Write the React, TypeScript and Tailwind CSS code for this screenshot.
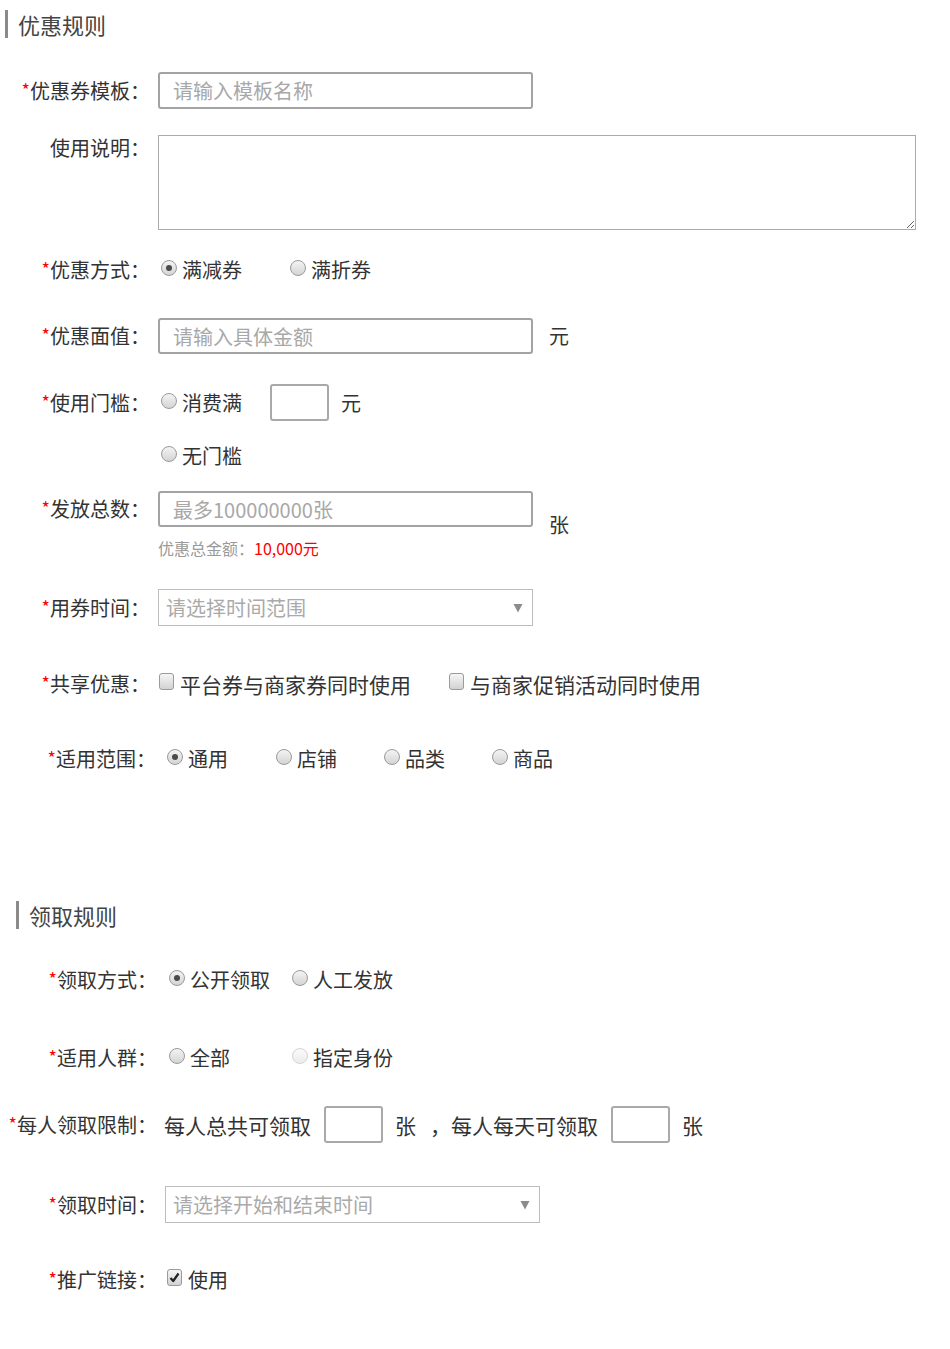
import React from 'react'

function Label({ text, req, w }: { text: string; req?: boolean; w: string }) {
  return (
    <div className={`${w} shrink-0 flex justify-end items-start text-[20px] leading-[24px] text-[#333] whitespace-nowrap`}>
      {req && <span className="text-[18px] leading-none text-[#ff0000] mt-[1px]">*</span>}
      <span>{text}：</span>
    </div>
  )
}

function Radio({ checked, disabled }: { checked?: boolean; disabled?: boolean }) {
  return (
    <span
      className={`shrink-0 w-[16px] h-[16px] rounded-full border flex items-center justify-center -mt-[4px] ${
        disabled
          ? 'border-[#d4d4d4] bg-linear-to-b from-[#fafafa] to-[#ececec]'
          : 'border-[#9a9a9a] bg-linear-to-b from-[#f4f4f4] to-[#d4d4d4]'
      }`}
    >
      {checked && <span className="w-[6px] h-[6px] rounded-full bg-[#4a4a4a]" />}
    </span>
  )
}

function Option({ text, checked, disabled, w }: { text: string; checked?: boolean; disabled?: boolean; w: string }) {
  return (
    <div className={`${w} shrink-0 flex items-center`}>
      <Radio checked={checked} disabled={disabled} />
      <span className="ml-[5px] text-[20px] leading-[24px] text-[#333] whitespace-nowrap">{text}</span>
    </div>
  )
}

function Checkbox({ checked }: { checked?: boolean }) {
  return (
    <span className="shrink-0 w-[15px] h-[17px] rounded-[3px] border border-[#9a9a9a] bg-linear-to-b from-[#f6f6f6] to-[#d2d2d2] flex items-center justify-center -mt-[6px]">
      {checked && (
        <svg width="11" height="11" viewBox="0 0 11 11">
          <path d="M1.5 6 L4.2 9 L9.5 1.5" fill="none" stroke="#222" strokeWidth="2.2" strokeLinejoin="round" />
        </svg>
      )}
    </span>
  )
}

function Section({ title, pad }: { title: string; pad: string }) {
  return (
    <div className={`flex items-center ${pad}`}>
      <div className="w-[3px] h-[28px] bg-[#8a8a8a]" />
      <span className="ml-[10px] text-[22px] leading-[28px] text-[#444]">{title}</span>
    </div>
  )
}

function Select({ placeholder }: { placeholder: string }) {
  return (
    <div className="w-[375px] h-[37px] border border-[#bdbdbd] flex items-center justify-between pl-[7px] pr-[9px]">
      <span className="text-[20px] leading-[24px] text-[#aaa]">{placeholder}</span>
      <svg width="10" height="10" viewBox="0 0 10 10">
        <path d="M0.5 1 L9.5 1 L5 9.5 Z" fill="#8c8c8c" />
      </svg>
    </div>
  )
}

export default function App() {
  const inputCls =
    'w-[375px] h-[36px] border-2 border-[#a3a3a3] rounded-[3px] pl-[13px] text-[20px] text-[#333] placeholder:text-[#a8a8a8] outline-none'

  return (
    <div className="w-[950px] min-h-[1349px] bg-white font-['Noto_Sans_CJK_SC',sans-serif] text-[#333]">
      {/* 优惠规则 */}
      <Section title="优惠规则" pad="pt-[10px] pl-[5px]" />

      <div className="flex items-center mt-[34px]">
        <Label text="优惠券模板" req w="w-[150px]" />
        <input className={`ml-[8px] ${inputCls} h-[37px]`} placeholder="请输入模板名称" />
      </div>

      <div className="flex items-start mt-[26px]">
        <div className="mt-[1px]">
          <Label text="使用说明" w="w-[150px]" />
        </div>
        <textarea className="ml-[8px] w-[758px] h-[95px] border border-[#ababab] outline-none" />
      </div>

      <div className="flex items-center mt-[25px] h-[30px]">
        <Label text="优惠方式" req w="w-[150px]" />
        <div className="ml-[11px] flex items-center">
          <Option text="满减券" checked w="w-[129px]" />
          <Option text="满折券" w="w-[100px]" />
        </div>
      </div>

      <div className="flex items-center mt-[33px]">
        <Label text="优惠面值" req w="w-[150px]" />
        <input className={`ml-[8px] ${inputCls}`} placeholder="请输入具体金额" />
        <span className="ml-[16px] text-[20px] leading-[24px]">元</span>
      </div>

      <div className="flex items-center mt-[30px]">
        <Label text="使用门槛" req w="w-[150px]" />
        <div className="ml-[11px] flex items-center">
          <Option text="消费满" w="w-[81px]" />
          <div className="ml-[28px] w-[59px] h-[37px] border-2 border-[#a9a9a9] rounded-[3px]" />
          <span className="ml-[12px] text-[20px] leading-[24px]">元</span>
        </div>
      </div>

      <div className="flex items-center mt-[20px] h-[30px] pl-[161px]">
        <Option text="无门槛" w="w-[100px]" />
      </div>

      <div className="flex items-start mt-[20px]">
        <div className="mt-[6px]">
          <Label text="发放总数" req w="w-[150px]" />
        </div>
        <div className="ml-[8px] flex flex-col">
          <input className={inputCls} placeholder="最多100000000张" />
          <div className="mt-[11px] text-[16px] leading-[20px]">
            <span className="text-[#9a9a9a]">优惠总金额：</span>
            <span className="text-[#ff0000]">10,000元</span>
          </div>
        </div>
        <span className="self-center ml-[16px] text-[20px] leading-[24px]">张</span>
      </div>

      <div className="flex items-center mt-[31px]">
        <Label text="用券时间" req w="w-[150px]" />
        <div className="ml-[8px]">
          <Select placeholder="请选择时间范围" />
        </div>
      </div>

      <div className="flex items-center mt-[43px] h-[30px]">
        <Label text="共享优惠" req w="w-[150px]" />
        <div className="ml-[9px] flex items-center">
          <div className="w-[290px] flex items-center">
            <Checkbox />
            <span className="ml-[6px] text-[21px] leading-[24px] whitespace-nowrap">平台券与商家券同时使用</span>
          </div>
          <div className="flex items-center">
            <Checkbox />
            <span className="ml-[6px] text-[21px] leading-[24px] whitespace-nowrap">与商家促销活动同时使用</span>
          </div>
        </div>
      </div>

      <div className="flex items-center mt-[45px] h-[30px]">
        <Label text="适用范围" req w="w-[156px]" />
        <div className="ml-[11px] flex items-center">
          <Option text="通用" checked w="w-[109px]" />
          <Option text="店铺" w="w-[108px]" />
          <Option text="品类" w="w-[108px]" />
          <Option text="商品" w="w-[80px]" />
        </div>
      </div>

      {/* 领取规则 */}
      <Section title="领取规则" pad="mt-[127px] pl-[16px]" />

      <div className="flex items-center mt-[36px] h-[30px]">
        <Label text="领取方式" req w="w-[157px]" />
        <div className="ml-[12px] flex items-center">
          <Option text="公开领取" checked w="w-[123px]" />
          <Option text="人工发放" w="w-[110px]" />
        </div>
      </div>

      <div className="flex items-center mt-[48px] h-[30px]">
        <Label text="适用人群" req w="w-[157px]" />
        <div className="ml-[12px] flex items-center">
          <Option text="全部" w="w-[123px]" />
          <Option text="指定身份" disabled w="w-[110px]" />
        </div>
      </div>

      <div className="flex items-center mt-[33px]">
        <Label text="每人领取限制" req w="w-[157px]" />
        <div className="ml-[7px] flex items-center text-[21px] leading-[24px] whitespace-nowrap">
          <span>每人总共可领取</span>
          <div className="ml-[13px] w-[59px] h-[37px] border-2 border-[#a9a9a9] rounded-[3px]" />
          <span className="ml-[12px]">张</span>
          <span className="ml-[14px]">，</span>
          <span>每人每天可领取</span>
          <div className="ml-[13px] w-[59px] h-[37px] border-2 border-[#a9a9a9] rounded-[3px]" />
          <span className="ml-[12px]">张</span>
        </div>
      </div>

      <div className="flex items-center mt-[43px]">
        <Label text="领取时间" req w="w-[157px]" />
        <div className="ml-[8px]">
          <Select placeholder="请选择开始和结束时间" />
        </div>
      </div>

      <div className="flex items-center mt-[42px] h-[30px]">
        <Label text="推广链接" req w="w-[157px]" />
        <div className="ml-[10px] flex items-center">
          <Checkbox checked />
          <span className="ml-[6px] text-[20px] leading-[24px]">使用</span>
        </div>
      </div>
    </div>
  )
}
